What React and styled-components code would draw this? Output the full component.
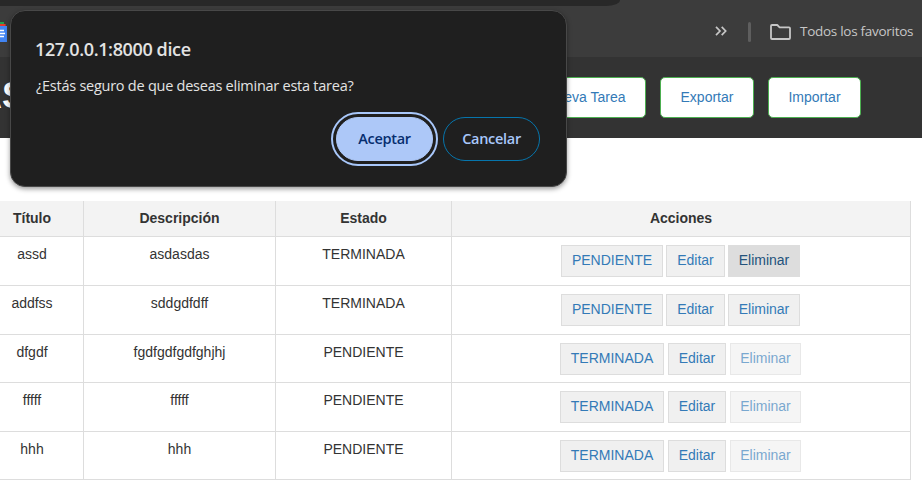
import React from "react";
import styled, { createGlobalStyle } from "styled-components";

const Global = createGlobalStyle`
  * { box-sizing: border-box; }
  body { margin: 0; background: #fff; overflow: hidden; }
`;

const chromeFont = `"Open Sans", "Noto Sans", sans-serif`;

const Page = styled.div`
  position: relative;
  width: 922px;
  height: 483px;
  overflow: hidden;
  background: #fff;
  color: #333;
  font: 14px/20px "Liberation Sans", Arial, sans-serif;
`;

const Toolbar = styled.div`
  height: 6px;
  background: #3c3c3c;
`;

const AddressBar = styled.div`
  width: 620px;
  height: 6px;
  background: #282828;
  border-bottom-right-radius: 14px 6px;
`;

const Bookmarks = styled.div`
  display: flex;
  align-items: center;
  height: 51px;
  background: #3c3c3c;
  color: #c7c7c7;
`;

const DocsIcon = styled.svg`
  width: 7px;
  height: 20px;
  margin-right: auto;
`;

const Chevrons = styled.svg`
  width: 12px;
  height: 10px;
  margin-bottom: 1px;
`;

const Divider = styled.div`
  width: 3px;
  height: 20px;
  margin: 0 19px 0 21px;
  border-radius: 2px;
  background: #5e5e5e;
`;

const FolderIcon = styled.svg`
  width: 21px;
  height: 16px;
`;

const Favorites = styled.span`
  width: 131px;
  padding: 0 0 2px 9px;
  font: 13.5px/20px ${chromeFont};
  letter-spacing: -0.28px;
  white-space: nowrap;
`;

const Header = styled.header`
  display: flex;
  align-items: center;
  justify-content: space-between;
  height: 81px;
  padding-right: 61px;
  background: #333;
`;

const Brand = styled.h1`
  display: flex;
  justify-content: flex-end;
  width: 26px;
  margin: 0 0 4px;
  color: #fff;
  font-size: 36px;
  line-height: 40px;
`;

const Nav = styled.nav`
  display: flex;
  gap: 14px;
`;

const NavLink = styled.a`
  height: 41px;
  width: ${(p) => p.$width}px;
  border: 1px solid #4caf50;
  border-radius: 5px;
  background: #fff;
  color: #337ab7;
  line-height: 39px;
  text-align: center;
  white-space: nowrap;
`;

const Table = styled.div`
  display: grid;
  grid-template-columns: 103px 192px 176px 459px;
  grid-template-rows: 36px 49px 49px 48px 49px 48px;
  width: 930px;
  margin: 63px 0 0 -19px;
`;

const Cell = styled.div`
  padding-top: 7px;
  border-right: 1px solid #ddd;
  border-bottom: 1px solid #ddd;
  text-align: center;
`;

const HeadCell = styled(Cell)`
  background: #f3f3f3;
  font-weight: bold;
`;

const Actions = styled(Cell)`
  display: flex;
  justify-content: center;
  gap: ${(p) => (p.$done ? 3 : 4)}px;
  padding: 8px 2px 0 0;
`;

const ActionButton = styled.button`
  height: 32px;
  width: ${(p) => p.$width}px;
  padding: 0 0 2px 1px;
  border: 1px solid #ddd;
  background: ${(p) => (p.$active ? "#ddd" : "#f0f0f0")};
  color: ${(p) => (p.$active ? "#23527c" : "#337ab7")};
  font: inherit;
  line-height: 28px;
  white-space: nowrap;
  opacity: ${(p) => (p.disabled ? 0.65 : 1)};
`;

const Dialog = styled.div`
  position: absolute;
  left: 10px;
  top: 10px;
  width: 557px;
  height: 177px;
  padding: 27px 26px 0 24px;
  border: 1px solid #484848;
  border-radius: 15px;
  background: #1f1f1f;
  box-shadow: 0 2px 5px rgba(0, 0, 0, 0.4);
  color: #e3e3e3;
  font-family: ${chromeFont};
`;

const DialogTitle = styled.h2`
  margin: 0;
  font-size: 18px;
  font-weight: 600;
  line-height: 22px;
  letter-spacing: -0.38px;
`;

const Message = styled.p`
  margin: 16px 0 0 1px;
  font-size: 14.5px;
  line-height: 20px;
  letter-spacing: -0.25px;
`;

const DialogActions = styled.div`
  display: flex;
  justify-content: flex-end;
  gap: 10px;
  margin-top: 21px;
`;

const DialogButton = styled.button`
  height: 44px;
  width: 97px;
  padding: 0 0 1px;
  border: 1px solid ${(p) => (p.$primary ? "#adc8f8" : "#0675ac")};
  border-radius: 22px;
  background: ${(p) => (p.$primary ? "#adc8f8" : "transparent")};
  color: ${(p) => (p.$primary ? "#062e6f" : "#a8c7fa")};
  outline: ${(p) => (p.$primary ? "2px solid #a8c7fa" : "none")};
  outline-offset: 3px;
  font: 600 14.5px/20px ${chromeFont};
  letter-spacing: -0.3px;
`;

const tasks = [
  { title: "assd", description: "asdasdas", done: true, active: true },
  { title: "addfss", description: "sddgdfdff", done: true },
  { title: "dfgdf", description: "fgdfgdfgdfghjhj" },
  { title: "fffff", description: "fffff" },
  { title: "hhh", description: "hhh" },
];

function TaskRow({ task }) {
  const { title, description, done, active } = task;
  return (
    <>
      <Cell>{title}</Cell>
      <Cell>{description}</Cell>
      <Cell>{done ? "TERMINADA" : "PENDIENTE"}</Cell>
      <Actions $done={done}>
        <ActionButton $width={done ? 102 : 104}>{done ? "PENDIENTE" : "TERMINADA"}</ActionButton>
        <ActionButton $width={done ? 59 : 58}>Editar</ActionButton>
        <ActionButton $width={done ? 72 : 71} $active={active} disabled={!done}>Eliminar</ActionButton>
      </Actions>
    </>
  );
}

export default function App() {
  return (
    <Page>
      <Global />
      <Toolbar>
        <AddressBar />
      </Toolbar>
      <Bookmarks>
        <DocsIcon viewBox="0 0 7 20">
          <path d="M0 0H4V3H0Z" fill="#23a050" />
          <path d="M0 2H5.6V5H0Z" fill="#e8392b" />
          <path d="M0 4H7V20H0Z" fill="#4285f4" />
          <path d="M0 8.5H4M0 11.5H5M0 14.5H4" stroke="#fff" strokeWidth="1.4" />
        </DocsIcon>
        <Chevrons viewBox="0 0 12 10" fill="none" stroke="#c7c7c7" strokeWidth="1.7">
          <path d="M1 .8 5 5 1 9.2M6.7 .8 10.7 5 6.7 9.2" />
        </Chevrons>
        <Divider />
        <FolderIcon viewBox="0 0 21 16" fill="none" stroke="#c7c7c7" strokeWidth="1.8" strokeLinejoin="round">
          <path d="M1 14V2Q1 1 2 1H7.3L9.6 3.3H19Q20 3.3 20 4.3V14Q20 15 19 15H2Q1 15 1 14Z" />
        </FolderIcon>
        <Favorites>Todos los favoritos</Favorites>
      </Bookmarks>
      <Header>
        <Brand>TAREAS</Brand>
        <Nav>
          <NavLink $width={120}>Nueva Tarea</NavLink>
          <NavLink $width={94}>Exportar</NavLink>
          <NavLink $width={93}>Importar</NavLink>
        </Nav>
      </Header>
      <Table>
        <HeadCell>Título</HeadCell>
        <HeadCell>Descripción</HeadCell>
        <HeadCell>Estado</HeadCell>
        <HeadCell>Acciones</HeadCell>
        {tasks.map((task) => (
          <TaskRow key={task.title} task={task} />
        ))}
      </Table>
      <Dialog role="dialog">
        <DialogTitle>127.0.0.1:8000 dice</DialogTitle>
        <Message>¿Estás seguro de que deseas eliminar esta tarea?</Message>
        <DialogActions>
          <DialogButton $primary>Aceptar</DialogButton>
          <DialogButton>Cancelar</DialogButton>
        </DialogActions>
      </Dialog>
    </Page>
  );
}
